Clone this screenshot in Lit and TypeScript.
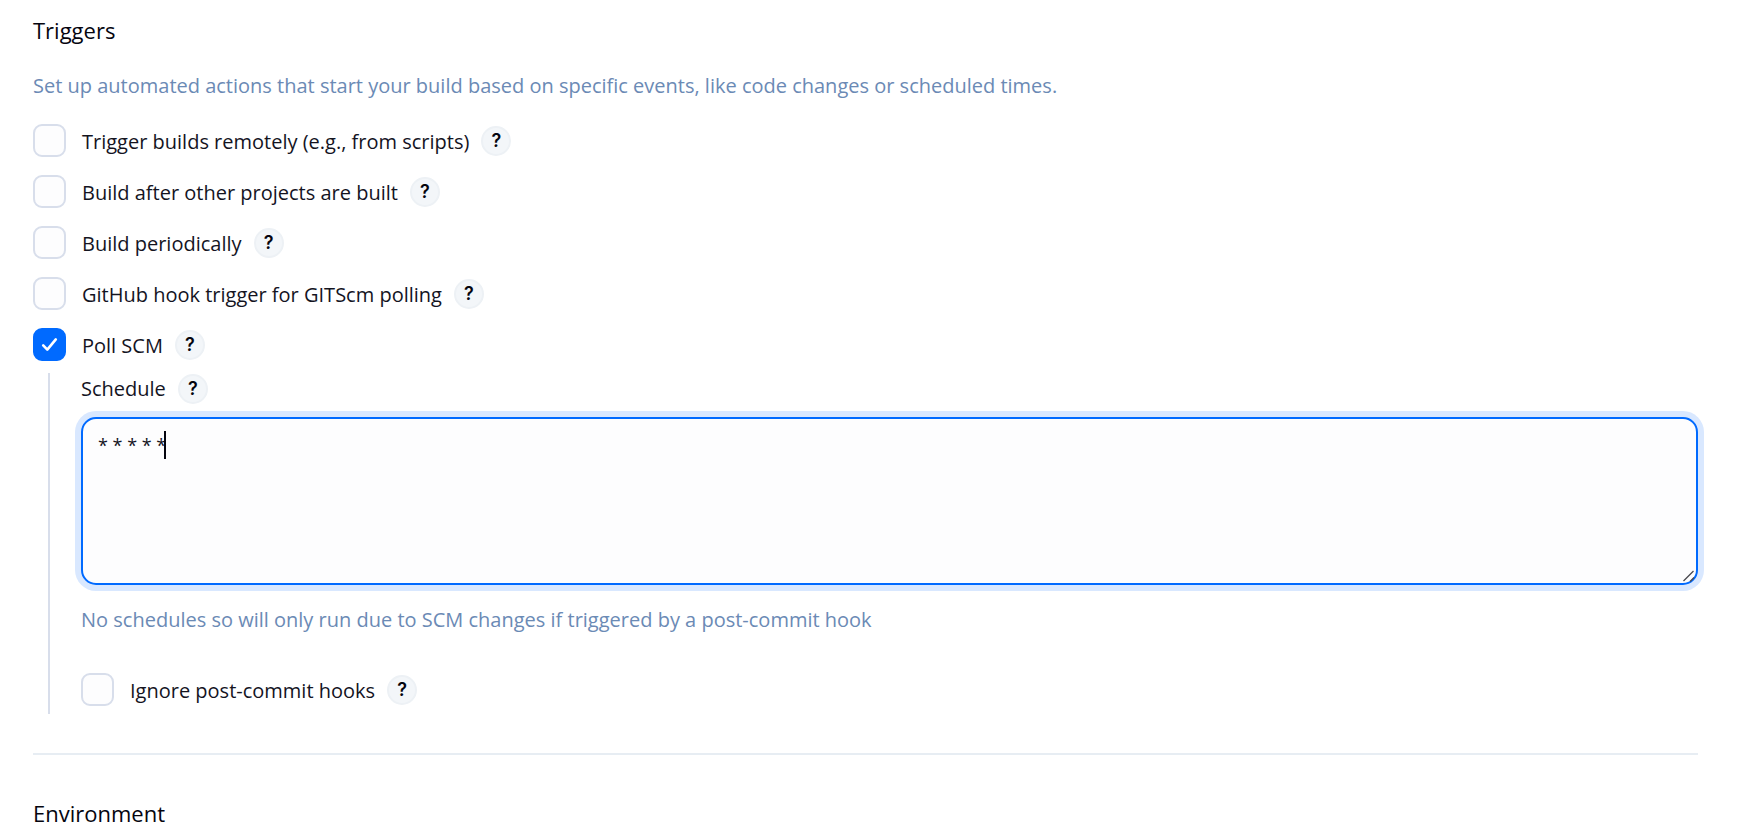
import { LitElement, html, css } from "lit";
import { customElement, property } from "lit/decorators.js";

@customElement("help-button")
class HelpButton extends LitElement {
  @property() topic = "";

  static styles = css`
    :host {
      display: flex;
      flex: none;
    }
    .help {
      display: flex;
      align-items: center;
      justify-content: center;
      width: 30px;
      height: 30px;
      padding: 0;
      border: 2px solid #edf1f5;
      border-radius: 50%;
      background: #f3f6f9;
      color: #05050f;
      font: 600 18px/20px Inter, "Noto Sans", sans-serif;
      cursor: pointer;
    }
  `;

  render() {
    return html`<button class="help" type="button" aria-label="Help for ${this.topic}">?</button>`;
  }
}

@customElement("check-row")
class CheckRow extends LitElement {
  @property() label = "";
  @property({ type: Boolean }) checked = false;

  static styles = css`
    :host {
      display: flex;
      align-items: center;
      gap: 12px;
    }
    .option {
      display: flex;
      align-items: center;
      gap: 16px;
      cursor: pointer;
    }
    .control {
      display: grid;
      width: 33px;
      height: 33px;
    }
    .box,
    .tick {
      grid-area: 1 / 1;
    }
    .box {
      appearance: none;
      box-sizing: border-box;
      width: 33px;
      height: 33px;
      margin: 0;
      border: 2px solid #d8deeb;
      border-radius: 9px;
      background: #fdfdfe;
    }
    .box:checked {
      border-color: #006aff;
      background: #006aff;
    }
    .tick {
      display: none;
      width: 33px;
      height: 33px;
      pointer-events: none;
    }
    .box:checked + .tick {
      display: block;
    }
    .text {
      padding-top: 2px;
      line-height: 31px;
    }
  `;

  render() {
    return html`
      <label class="option">
        <span class="control">
          <input class="box" type="checkbox" .checked=${this.checked} />
          <svg class="tick" viewBox="0 0 33 33" fill="none" aria-hidden="true">
            <path
              d="M10.2 17.4 14.3 21.6 22.8 11.4"
              stroke="#fff"
              stroke-width="2.6"
              stroke-linecap="round"
              stroke-linejoin="round"
            />
          </svg>
        </span>
        <span class="text">${this.label}</span>
      </label>
      <help-button .topic=${this.label}></help-button>
    `;
  }
}

@customElement("app-root")
class AppRoot extends LitElement {
  static styles = css`
    :host {
      display: block;
      padding: 13px 64px 0 33px;
      background: #fff;
      color: #14141f;
      font: 400 20px/30px "Open Sans", "Noto Sans", sans-serif;
    }
    .title {
      margin: 0;
      color: #05050f;
      font-size: 22px;
      line-height: 34px;
      font-weight: 400;
    }
    .description {
      margin: 24px 0 0;
      color: #6b8ab5;
    }
    .options {
      display: grid;
      gap: 18px;
      margin-top: 23px;
    }
    .nested {
      margin: 12px 0 0 15px;
      padding: 1px 0 8px 31px;
      border-left: 2px solid #d8deeb;
    }
    .schedule-head {
      display: flex;
      align-items: center;
      gap: 12px;
    }
    .field {
      position: relative;
      display: flex;
      margin-top: 13px;
    }
    .schedule {
      box-sizing: border-box;
      width: 100%;
      height: 168px;
      margin: 0;
      padding: 12px 15px;
      border: 2px solid #006aff;
      border-radius: 15px;
      outline: none;
      background: #fdfdfe;
      box-shadow: 0 0 0 6px #d9e8ff;
      color: #14141f;
      caret-color: transparent;
      font: 400 18px/28px "Open Sans", "Noto Sans", sans-serif;
      resize: vertical;
    }
    .schedule::-webkit-resizer {
      background: transparent;
    }
    .caret {
      position: absolute;
      top: 14px;
      left: 83px;
      width: 2px;
      height: 28px;
      background: #05050f;
    }
    .grip {
      position: absolute;
      right: 2px;
      bottom: 2px;
      width: 14px;
      height: 14px;
      pointer-events: none;
    }
    .status {
      margin: 20px 0 38px;
      color: #6b8ab5;
    }
    .divider {
      height: 2px;
      margin: 39px 0 41px;
      border: 0;
      background: #e7edf3;
    }
  `;

  render() {
    return html`
      <section>
        <h2 class="title">Triggers</h2>
        <p class="description">
          Set up automated actions that start your build based on specific events, like code changes or scheduled times.
        </p>
        <div class="options">
          <check-row label="Trigger builds remotely (e.g., from scripts)"></check-row>
          <check-row label="Build after other projects are built"></check-row>
          <check-row label="Build periodically"></check-row>
          <check-row label="GitHub hook trigger for GITScm polling"></check-row>
          <check-row label="Poll SCM" checked></check-row>
        </div>
        <div class="nested">
          <div class="schedule-head">
            <label for="schedule">Schedule</label>
            <help-button topic="Schedule"></help-button>
          </div>
          <div class="field">
            <textarea class="schedule" id="schedule" spellcheck="false" .value=${"* * * * *"}></textarea>
            <span class="caret" aria-hidden="true"></span>
            <svg class="grip" viewBox="0 0 14 14" fill="none" stroke="#4a4a50" stroke-width="1.3" aria-hidden="true">
              <path d="M1.5 12 11.5 2M8 12.5 12 8.5" />
            </svg>
          </div>
          <p class="status">No schedules so will only run due to SCM changes if triggered by a post-commit hook</p>
          <check-row label="Ignore post-commit hooks"></check-row>
        </div>
      </section>
      <hr class="divider" />
      <section>
        <h2 class="title">Environment</h2>
      </section>
    `;
  }
}
